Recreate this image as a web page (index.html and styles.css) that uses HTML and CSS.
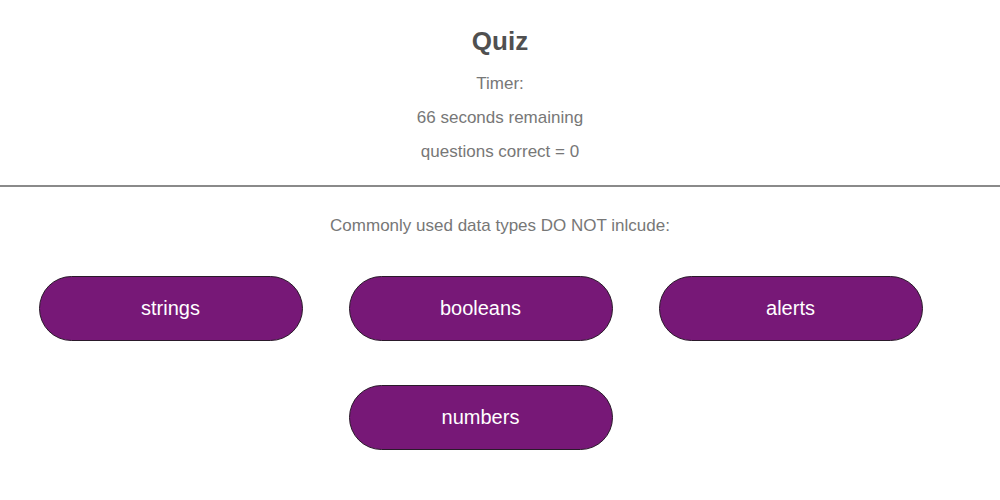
FILE: index.html
```html
<!DOCTYPE html>
<html>
<head>
<meta charset="utf-8">
<link rel="stylesheet" href="styles.css">
</head>
<body>
<header class="header">
  <h1 class="title">Quiz</h1>
  <p class="info">Timer:</p>
  <p class="info">66 seconds remaining</p>
  <p class="info">questions correct = 0</p>
</header>
<hr class="divider">
<main class="quiz">
  <p class="question">Commonly used data types DO NOT inlcude:</p>
  <div class="answers">
    <button class="answer">strings</button>
    <button class="answer">booleans</button>
    <button class="answer">alerts</button>
    <button class="answer">numbers</button>
  </div>
</main>
</body>
</html>
```
FILE: styles.css
```css
html, body {
  margin: 0;
  padding: 0;
  background: #ffffff;
}
body {
  font-family: "Liberation Sans", Arial, sans-serif;
  color: #777777;
}
.header {
  text-align: center;
  padding-top: 26px;
}
.title {
  margin: 0;
  font-size: 26px;
  line-height: 30px;
  font-weight: bold;
  color: #505050;
}
.info {
  margin: 18px 0 0 0;
  font-size: 17px;
  line-height: 19px;
  color: #777777;
}
.info + .info {
  margin-top: 15px;
}
.divider {
  margin: 24px 0 0 0;
  border: 0;
  height: 2px;
  background: #8a8a8a;
}
.quiz {
  text-align: center;
}
.question {
  margin: 29px 0 0 0;
  font-size: 17px;
  line-height: 19px;
  color: #777777;
}
.answers {
  display: flex;
  flex-wrap: wrap;
  justify-content: center;
  column-gap: 46px;
  row-gap: 44px;
  padding: 0 39px 0 0;
  margin-top: 41px;
}
.answer {
  width: 264px;
  height: 65px;
  border: 1px solid #2a1a2a;
  border-radius: 33px;
  background: #771877;
  color: #ffffff;
  font-family: "Liberation Sans", Arial, sans-serif;
  font-size: 20px;
  padding: 0;
}
```
